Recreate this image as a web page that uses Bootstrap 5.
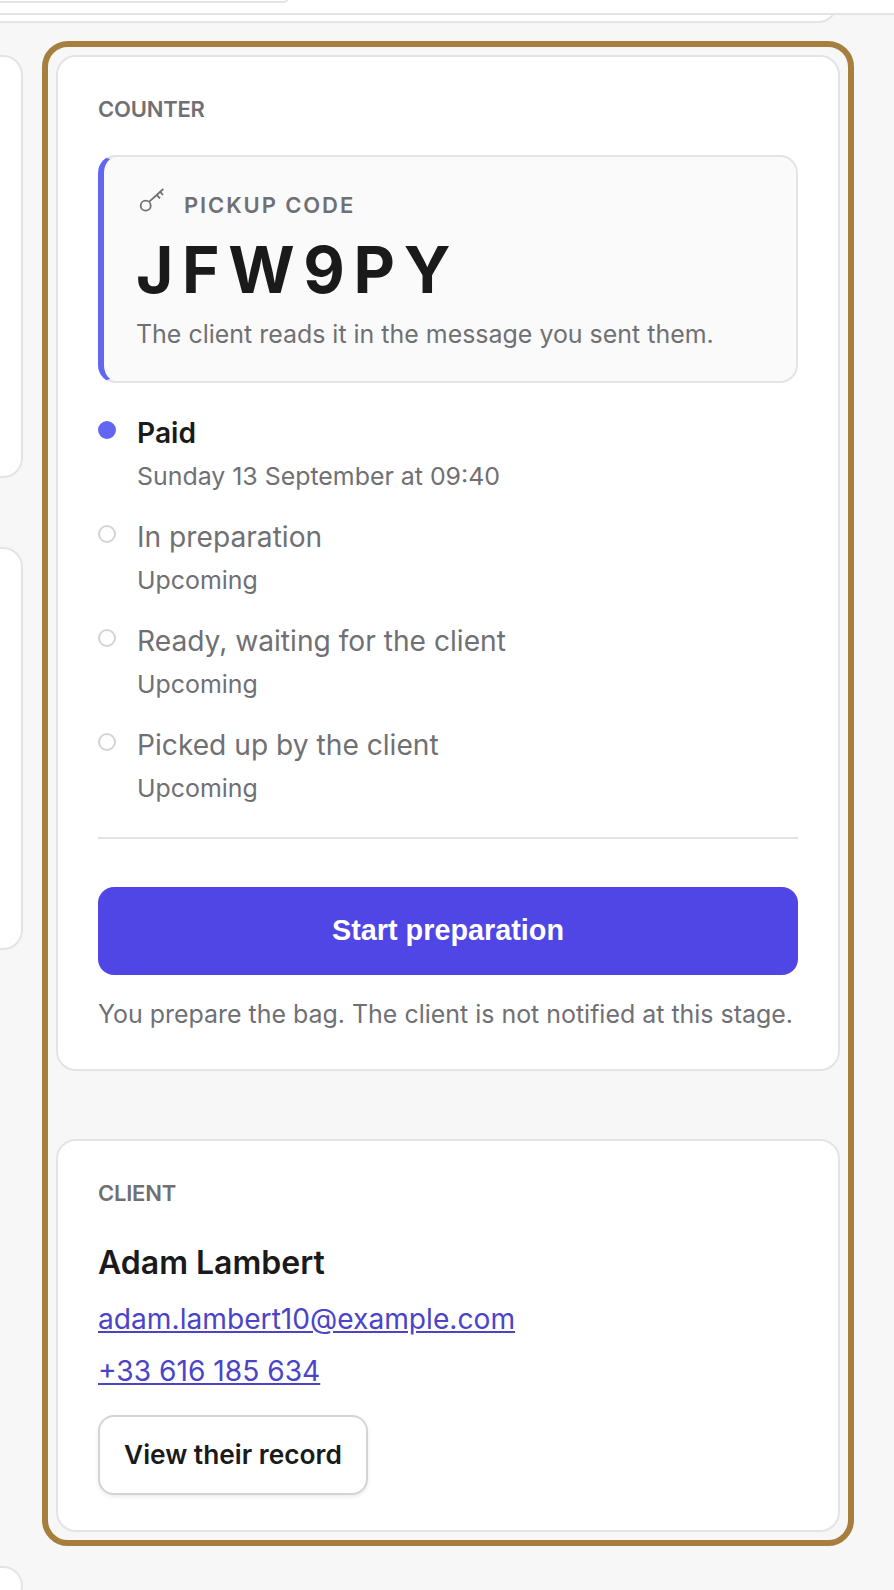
<!DOCTYPE html>
<html lang="en">
  <head>
    <meta charset="UTF-8" />
    <meta name="viewport" content="width=device-width, initial-scale=1.0" />
    <title>Order</title>
    <link href="https://cdn.jsdelivr.net/npm/bootstrap@5.3.0/dist/css/bootstrap.min.css" rel="stylesheet" />
    <style>
      html, body {
        height: 1590px;
        overflow: hidden;
      }
      body {
        background-color: #f7f7f8;
        font-family: "Inter", "Liberation Sans", sans-serif;
        color: #1a1a1a;
      }
      .top-strip {
        height: 15px;
        background-color: #fff;
        border-bottom: 2px solid #e4e4e7;
        overflow: hidden;
      }
      .top-pill {
        width: 310px;
        height: 14px;
        margin-top: -11px;
        margin-left: -20px;
        border: 2px solid #e4e4e7;
        border-radius: 10px;
      }
      .top-clip {
        height: 8px;
        overflow: hidden;
      }
      .top-card {
        width: 858px;
        height: 40px;
        margin-top: -32px;
        margin-left: -20px;
        background-color: #fff;
        border: 2px solid #e4e4e7;
        border-radius: 20px;
      }
      .page-body {
        height: 1567px;
        overflow: hidden;
        padding-top: 18px;
        gap: 19px;
      }
      .side-col {
        width: 23px;
        flex: none;
        overflow: hidden;
        padding-top: 14px;
      }
      .side-card {
        width: 70px;
        margin-left: -47px;
        background-color: #fff;
        border: 2px solid #e4e4e7;
        border-radius: 20px;
      }
      .side-a { height: 423px; margin-bottom: 69px; }
      .side-b { height: 403px; margin-bottom: 616px; }
      .side-c { height: 40px; }
      .gold-frame {
        width: 812px;
        flex: none;
        align-self: flex-start;
        border: 6px solid #a67f3e;
        border-radius: 26px;
        padding: 8px;
        gap: 68px;
      }
      .panel {
        background-color: #fff;
        border: 2px solid #e4e4e7;
        border-radius: 20px;
        padding: 40px 40px 35px;
      }
      .panel-title {
        font-size: 22px;
        line-height: 24px;
        font-weight: 600;
        letter-spacing: -0.22px;
        color: #707074;
        text-transform: uppercase;
        margin-bottom: 34px;
      }
      .code-box {
        background-color: #fafafb;
        border: 2px solid #e4e4e7;
        border-left: 6px solid #6366f1;
        border-radius: 18px;
        padding: 34px 32px 29px 32px;
      }
      .code-label {
        height: 28px;
        font-size: 22px;
        line-height: 28px;
        font-weight: 600;
        letter-spacing: 1.9px;
        color: #707074;
      }
      .key-icon {
        flex: none;
        margin: -4px 0;
      }
      .code-value {
        margin-top: 15px;
        font-size: 64px;
        line-height: 72px;
        font-weight: 700;
        letter-spacing: 8.650px;
      }
      .code-note {
        margin-top: 10px;
        font-size: 24.950px;
        line-height: 36px;
        color: #707074;
      }
      .step-dot {
        width: 18px;
        height: 18px;
        flex: none;
        border-radius: 50%;
        margin-top: 10px;
        border: 2px solid #d4d4d8;
      }
      .step-dot.is-done {
        background-color: #6366f1;
        border-color: #6366f1;
      }
      .step-name {
        font-size: 28.160px;
        line-height: 45px;
        color: #707074;
      }
      .step-name.is-done {
        font-weight: 600;
        color: #1a1a1a;
      }
      .step-when {
        font-size: 24.900px;
        line-height: 40px;
        color: #707074;
      }
      .steps {
        gap: 19px;
        margin-top: 28px;
        padding-bottom: 29px;
        border-bottom: 2px solid #e4e4e7;
        margin-bottom: 48px;
      }
      .step-row {
        gap: 21px;
      }
      .btn-start {
        height: 88px;
        background-color: #4f46e5;
        border: 0;
        border-radius: 16px;
        color: #fff;
        font-family: "Liberation Sans", sans-serif;
        font-size: 28.800px;
        font-weight: 700;
      }
      .start-note {
        font-size: 24.950px;
        line-height: 40px;
        color: #707074;
        margin-top: 19px;
      }
      .client-name {
        font-size: 32px;
        line-height: 45px;
        font-weight: 600;
        padding-top: 1px;
        margin-bottom: 12px;
      }
      .client-link {
        display: block;
        width: fit-content;
        font-size: 28.160px;
        line-height: 45px;
        color: #4b44c8;
        margin-bottom: 7px;
      }
      .btn-record {
        height: 80px;
        background-color: #fff;
        border: 2px solid #d4d4d8;
        border-radius: 16px;
        box-shadow: 0 2px 4px rgba(0, 0, 0, 0.08);
        padding: 0 24px;
        font-size: 26.300px;
        font-weight: 600;
        color: #1a1a1a;
        margin-top: 14px;
      }
    </style>
  </head>
  <body>
    <div class="top-strip"><div class="top-pill"></div></div>
    <div class="top-clip"><div class="top-card"></div></div>

    <div class="page-body d-flex">
      <div class="side-col">
        <div class="side-card side-a"></div>
        <div class="side-card side-b"></div>
        <div class="side-card side-c"></div>
      </div>

      <div class="gold-frame d-flex flex-column">
        <section class="panel">
          <div class="panel-title">Counter</div>
          <div class="code-box">
            <div class="code-label d-flex align-items-center gap-3">
              <svg class="key-icon" width="32" height="36" viewBox="0 0 32 36" fill="none" stroke="#707074" stroke-width="1.8" aria-hidden="true">
                <circle cx="9.700" cy="18.700" r="5" />
                <path d="M13.300 14.700 27.300 2M20.700 8l3.300 3.300M24 4.700 27 8" />
              </svg>
              <span>PICKUP CODE</span>
            </div>
            <div class="code-value">JFW9PY</div>
            <div class="code-note">The client reads it in the message you sent them.</div>
          </div>

          <div class="steps d-flex flex-column">
            <div class="step-row d-flex">
              <span class="step-dot is-done"></span>
              <div>
                <div class="step-name is-done">Paid</div>
                <div class="step-when">Sunday 13 September at 09:40</div>
              </div>
            </div>
            <div class="step-row d-flex">
              <span class="step-dot"></span>
              <div>
                <div class="step-name">In preparation</div>
                <div class="step-when">Upcoming</div>
              </div>
            </div>
            <div class="step-row d-flex">
              <span class="step-dot"></span>
              <div>
                <div class="step-name">Ready, waiting for the client</div>
                <div class="step-when">Upcoming</div>
              </div>
            </div>
            <div class="step-row d-flex">
              <span class="step-dot"></span>
              <div>
                <div class="step-name">Picked up by the client</div>
                <div class="step-when">Upcoming</div>
              </div>
            </div>
          </div>

          <button type="button" class="btn btn-start w-100">Start preparation</button>
          <div class="start-note">You prepare the bag. The client is not notified at this stage.</div>
        </section>

        <section class="panel">
          <div class="panel-title">Client</div>
          <div class="client-name">Adam Lambert</div>
          <a class="client-link" href="#">adam.lambert10@example.com</a>
          <a class="client-link" href="#">+33 616 185 634</a>
          <button type="button" class="btn btn-record">View their record</button>
        </section>
      </div>
    </div>

    <script src="https://cdn.jsdelivr.net/npm/bootstrap@5.3.0/dist/js/bootstrap.bundle.min.js"></script>
  </body>
</html>
